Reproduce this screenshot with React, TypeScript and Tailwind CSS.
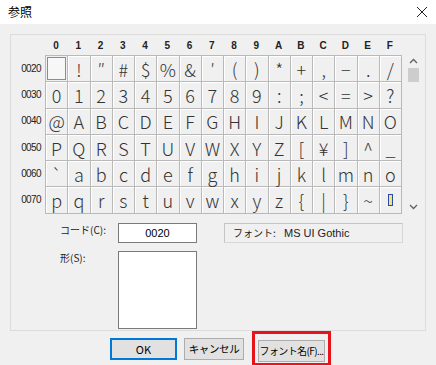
import React from 'react'

const jp = { fontFamily: '"Noto Sans CJK JP", "Liberation Sans", sans-serif' }
const sans = { fontFamily: '"Liberation Sans", "Noto Sans CJK JP", sans-serif' }

const heads = ['0', '1', '2', '3', '4', '5', '6', '7', '8', '9', 'A', 'B', 'C', 'D', 'E', 'F']

const rows: [string, string[]][] = [
  ['0020', [' ', '!', '″', '#', '$', '%', '&', '′', '(', ')', '*', '+', ',', '−', '.', '/']],
  ['0030', ['0', '1', '2', '3', '4', '5', '6', '7', '8', '9', ':', ';', '<', '=', '>', '?']],
  ['0040', ['@', 'A', 'B', 'C', 'D', 'E', 'F', 'G', 'H', 'I', 'J', 'K', 'L', 'M', 'N', 'O']],
  ['0050', ['P', 'Q', 'R', 'S', 'T', 'U', 'V', 'W', 'X', 'Y', 'Z', '[', '¥', ']', '^', '_']],
  ['0060', ['`', 'a', 'b', 'c', 'd', 'e', 'f', 'g', 'h', 'i', 'j', 'k', 'l', 'm', 'n', 'o']],
  ['0070', ['p', 'q', 'r', 's', 't', 'u', 'v', 'w', 'x', 'y', 'z', '{', '|', '}', '~', 'DEL']],
]

function Cell({ ch, selected }: { ch: string; selected?: boolean }) {
  if (selected) {
    return (
      <div className="h-[26.3px] border-r border-b border-[#b9b9b9] p-[1px]">
        <div className="h-full w-full border border-[#8c8c8c] bg-[#f7f7f7]" />
      </div>
    )
  }
  return (
    <div
      className="h-[26.3px] border-r border-b border-[#b9b9b9] shadow-[inset_1px_1px_0_#ffffff] flex items-center justify-center text-[18px] text-[#333] leading-none"
      style={jp}
    >
      {ch === 'DEL' ? (
        <span className="block w-[5px] h-[12px] border border-[#2a4aa8] bg-[#f3e27a]" />
      ) : (
        <span className="font-light">{ch}</span>
      )}
    </div>
  )
}

function Chevron({ up }: { up?: boolean }) {
  return (
    <svg width="9" height="6" viewBox="0 0 9 6" className="block">
      <path d={up ? 'M1 5 L4.5 1.5 L8 5' : 'M1 1 L4.5 4.5 L8 1'} fill="none" stroke="#606060" strokeWidth="1.3" />
    </svg>
  )
}

export default function App() {
  return (
    <div className="w-[436px] h-[365px] bg-white overflow-hidden" style={sans}>
      <div className="h-[24px] flex items-center justify-between pl-[8px] pr-[6px]">
        <span className="text-[12px] text-black" style={jp}>参照</span>
        <svg width="14" height="14" viewBox="0 0 14 14" className="mr-[1px]">
          <path d="M2 2 L12 12 M12 2 L2 12" stroke="#222" strokeWidth="1" />
        </svg>
      </div>
      <div className="h-[341px] bg-[#f0f0f0] pt-[10px] pl-[10px]">
        <div className="w-[416px] h-[297px] border border-[#dcdcdc] flex flex-col">
          <div className="flex">
            <div className="grid grid-cols-[34px_repeat(16,22.25px)]">
              <div className="h-[20px]" />
              {heads.map((h) => (
                <div key={h} className="h-[20px] flex items-center justify-center text-[10px] font-bold text-[#222]">
                  {h}
                </div>
              ))}
            </div>
          </div>
          <div className="flex">
            <div className="flex flex-col">
              {rows.map(([label]) => (
                <div key={label} className="w-[34px] h-[26.3px] flex items-center justify-end pr-[4px] text-[10px] tracking-[-0.6px] text-[#222]">
                  {label}
                </div>
              ))}
            </div>
            <div className="grid grid-cols-[repeat(16,22.25px)] border-t border-l border-[#b9b9b9] h-fit">
              {rows.map(([label, chars]) =>
                chars.map((c, i) => <Cell key={label + i} ch={c} selected={label === '0020' && i === 0} />)
              )}
            </div>
            <div className="w-[23px] h-[158px] flex flex-col items-center pt-[3px] pb-[3px]">
              <Chevron up />
              <div className="mt-[4px] w-[11px] h-[14px] bg-[#cdcdcd]" />
              <div className="flex-1" />
              <Chevron />
            </div>
          </div>
          <div className="mt-[9px] flex items-start pl-[49px]">
            <span className="w-[58px] text-[10px] text-[#222] leading-[14px]" style={jp}>コード(C):</span>
            <div className="w-[79px] h-[20px] bg-white border border-[#7a7a7a] flex items-center justify-center text-[11px] text-black">
              0020
            </div>
            <div className="ml-[27px] w-[179px] h-[20px] border border-[#d8d8d8] border-t-[#c4c4c4] border-l-[#c4c4c4] flex items-center text-[11px] text-[#222]" style={jp}>
              <span className="pl-[8px] w-[59px] text-[10px]">フォント:</span>
              <span style={sans}>MS UI Gothic</span>
            </div>
          </div>
          <div className="mt-[8px] flex items-start pl-[49px]">
            <span className="w-[58px] text-[10px] text-[#222] leading-[14px]" style={jp}>形(S):</span>
            <div className="w-[79px] h-[78px] bg-white border border-[#7a7a7a]" />
          </div>
        </div>
        <div className="mt-[7px] flex items-start pl-[100px]">
          <button className="w-[67px] h-[22px] bg-[#e1e1e1] border border-[#0078d7] shadow-[inset_0_0_0_1px_#0078d7] text-[11px] leading-none text-black" style={jp}>
            OK
          </button>
          <button className="ml-[7px] w-[60px] h-[22px] bg-[#e1e1e1] border border-[#adadad] text-[10.5px] leading-none tracking-[-0.4px] whitespace-nowrap text-black" style={jp}>
            キャンセル
          </button>
          <div className="relative ml-[14px]">
            <button className="w-[67px] h-[22px] px-0 bg-[#e1e1e1] border border-[#adadad] text-[10px] leading-none tracking-[-0.6px] whitespace-nowrap text-black" style={jp}>
              フォント名(F)...
            </button>
            <div className="absolute left-[-6px] right-[-6px] top-[-7px] bottom-[-4px] border-[3px] border-[#e8141c]" />
          </div>
        </div>
      </div>
    </div>
  )
}
